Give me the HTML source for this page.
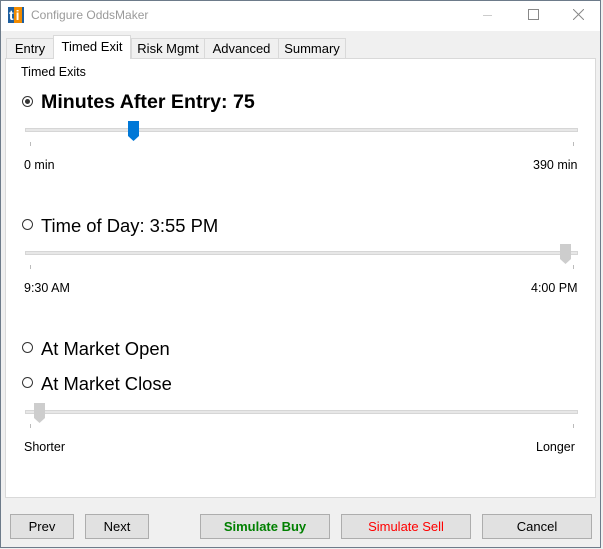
<html><head><style>
body{margin:0;width:603px;height:549px;overflow:hidden;font-family:"Liberation Sans",sans-serif;background:#f0f0f0;position:relative}
.a{position:absolute}
.win{left:0;top:0;width:601px;height:548px;border:1px solid #6d7b8a;box-sizing:border-box}
.tb{left:1px;top:1px;width:599px;height:30px;background:#fff}
.tab{top:38px;height:20px;border:1px solid #d9d9d9;border-bottom:none;background:#f0f0f0;font-size:13px;line-height:20px;text-align:center;box-sizing:border-box;color:#000}
.panel{left:5px;top:58px;width:591px;height:440px;background:#fff;border:1px solid #d9d9d9;box-sizing:border-box}
.s{font-size:12.5px;color:#000}
.track{height:4px;background:#e7e7e7;border:1px solid #d6d6d6;box-sizing:border-box;left:25px;width:553px}
.tick{width:1px;height:4px;background:#bbb}
.rad{width:11px;height:11px;border:1px solid #333;border-radius:50%;box-sizing:border-box}
.big{font-size:18.4px;color:#000}
.btn{top:514px;height:25px;background:#e1e1e1;border:1px solid #adadad;box-sizing:border-box;font-size:13px;text-align:center;line-height:23px}
</style></head><body>
<div class="a win"></div>
<div class="a tb"></div>
<div class="a" style="left:8px;top:7px;width:16px;height:16px;background:#1e5fa0;color:#fff;font-weight:bold;font-size:14px;line-height:16px;overflow:hidden"><span style="margin-left:1px">t</span><span style="background:#f08a00;padding:0 2px">i</span></div>
<div class="a" style="left:31px;top:8px;font-size:12px;color:#9a9a9a">Configure OddsMaker</div>
<div class="a" style="left:483px;top:15px;width:9px;height:1px;background:#ccc"></div>
<div class="a" style="left:528px;top:9px;width:9px;height:9px;border:1px solid #888"></div>
<svg class="a" style="left:573px;top:9px" width="11" height="11"><path d="M0 0L11 11M11 0L0 11" stroke="#888" stroke-width="1"/></svg>
<div class="a panel"></div>
<div class="a tab" style="left:6px;width:48px">Entry</div>
<div class="a tab" style="left:131px;width:74px">Risk Mgmt</div>
<div class="a tab" style="left:204px;width:75px">Advanced</div>
<div class="a tab" style="left:278px;width:68px">Summary</div>
<div class="a tab" style="left:53px;top:35px;height:24px;width:78px;background:#fff;line-height:22px">Timed Exit</div>
<div class="a s" style="left:21px;top:65px">Timed Exits</div>
<div class="a rad" style="left:22px;top:96px"></div><div class="a" style="left:25px;top:99px;width:5px;height:5px;border-radius:50%;background:#333"></div>
<div class="a big" style="left:41px;top:91px;font-weight:bold;font-size:19.6px">Minutes After Entry: 75</div>
<div class="a track" style="top:128px"></div>
<svg class="a" style="left:128px;top:121px" width="11" height="20"><path d="M0 0H11V15L5.5 20L0 15Z" fill="#0078d7"/></svg>
<div class="a tick" style="left:30px;top:142px"></div><div class="a tick" style="left:573px;top:142px"></div>
<div class="a s" style="left:24px;top:158px">0 min</div>
<div class="a s" style="left:533px;top:158px">390 min</div>
<div class="a rad" style="left:22px;top:219px"></div>
<div class="a big" style="left:41px;top:215px">Time of Day: 3:55 PM</div>
<div class="a track" style="top:251px"></div>
<svg class="a" style="left:560px;top:244px" width="11" height="20"><path d="M0 0H11V15L5.5 20L0 15Z" fill="#cdcdcd"/></svg>
<div class="a tick" style="left:30px;top:265px"></div><div class="a tick" style="left:573px;top:265px"></div>
<div class="a s" style="left:24px;top:281px">9:30 AM</div>
<div class="a s" style="left:531px;top:281px">4:00 PM</div>
<div class="a rad" style="left:22px;top:342px"></div>
<div class="a big" style="left:41px;top:338px">At Market Open</div>
<div class="a rad" style="left:22px;top:377px"></div>
<div class="a big" style="left:41px;top:373px">At Market Close</div>
<div class="a track" style="top:410px"></div>
<svg class="a" style="left:34px;top:403px" width="11" height="20"><path d="M0 0H11V15L5.5 20L0 15Z" fill="#cdcdcd"/></svg>
<div class="a tick" style="left:30px;top:424px"></div><div class="a tick" style="left:573px;top:424px"></div>
<div class="a s" style="left:24px;top:440px">Shorter</div>
<div class="a s" style="left:536px;top:440px">Longer</div>
<div class="a btn" style="left:10px;width:64px">Prev</div>
<div class="a btn" style="left:85px;width:64px">Next</div>
<div class="a btn" style="left:200px;width:130px;color:#008000;font-weight:bold">Simulate Buy</div>
<div class="a btn" style="left:341px;width:130px;color:#ff0000">Simulate Sell</div>
<div class="a btn" style="left:482px;width:110px">Cancel</div>
</body></html>
